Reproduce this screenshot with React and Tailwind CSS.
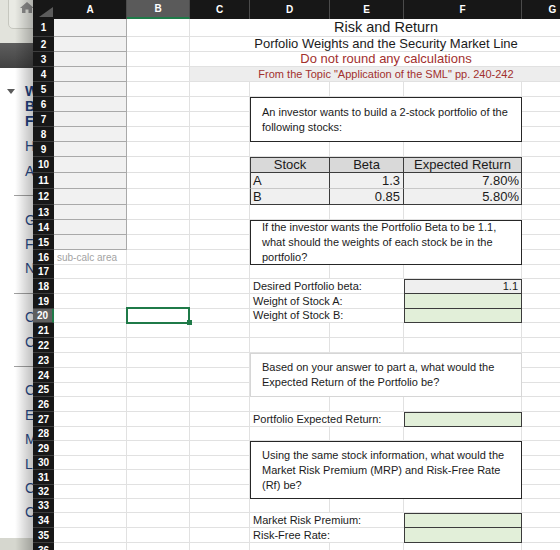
import React from 'react';

const W = {
  A: 'w-[73px]',
  B: 'w-[63px]',
  C: 'w-[60px]',
  D: 'w-[80px]',
  E: 'w-[74px]',
  F: 'w-[118px]',
  G: 'w-[62px]',
  DF: 'w-[272px]',
};
const COLS = ['A', 'B', 'C', 'D', 'E', 'F', 'G'];

const GRID = 'border-r border-b border-[#e1e1e1]';
const LINE_B = 'border-b border-[#e1e1e1]';
const INK = 'border-[#3b3b3b]';

// sheet is zoomed, so rows are not all the same height
const ROW_H = {
  1: 'h-[18px]',
  10: 'h-[16px]',
  11: 'h-[16px]',
  12: 'h-[16px]',
  17: 'h-[14px]',
  20: 'h-[14px]',
  25: 'h-[14px]',
  28: 'h-[14px]',
  30: 'h-[14px]',
  32: 'h-[14px]',
  33: 'h-[14px]',
};
const ROWS = Array.from({ length: 36 }, (_, i) => i + 1);

const TITLES = {
  1: <span className="text-[14.5px] text-[#1b1b1b]">Risk and Return</span>,
  2: <span className="text-[13px] text-[#1b1b1b]">Porfolio Weights and the Security Market Line</span>,
  3: <span className="text-[13px] text-[#a2302e]">Do not round any calculations</span>,
  4: <span className="text-[11px] text-[#a2302e]">From the Topic "Application of the SML" pp. 240-242</span>,
};

const STOCKS = {
  11: { s: 'A', beta: '1.3', er: '7.80%' },
  12: { s: 'B', beta: '0.85', er: '5.80%' },
};

const LABELS = {
  18: 'Desired Portfolio beta:',
  19: 'Weight of Stock A:',
  20: 'Weight of Stock B:',
  27: 'Portfolio Expected Return:',
  34: 'Market Risk Premium:',
  35: 'Risk-Free Rate:',
};
const INPUTS = {
  18: { bg: 'bg-[#efefef]', top: true, v: '1.1' },
  19: { bg: 'bg-[#e2efd9]' },
  20: { bg: 'bg-[#e2efd9]' },
  27: { bg: 'bg-[#e2efd9]', top: true },
  34: { bg: 'bg-[#e2efd9]', top: true },
  35: { bg: 'bg-[#e2efd9]' },
};

const BOXES = {
  6: {
    h: 'h-[45px]',
    lines: ['An investor wants to build a 2-stock portfolio of the', 'following stocks:'],
  },
  14: {
    h: 'h-[45px]',
    lines: [
      'If the investor wants the Portfolio Beta to be 1.1,',
      'what should the weights of each stock be in the',
      'portfolio?',
    ],
  },
  23: {
    h: 'h-[44px]',
    light: true,
    lines: ['Based on your answer to part a, what would the', 'Expected Return of the Portfolio be?'],
  },
  29: {
    h: 'h-[58px]',
    lines: [
      'Using the same stock information, what would the',
      'Market Risk Premium (MRP) and Risk-Free Rate',
      '(Rf) be?',
    ],
  },
};

const NAV_TOP = ['Week 5', 'Blackboard', 'Files'];
const NAV = [
  'Home',
  'Assignments',
  null,
  'Grades',
  'Files',
  'News',
  null,
  'Calendar',
  'Chat',
  null,
  'Contacts',
  'Email',
  'My Grades',
  'Library',
  'Collaborate',
  'Course Help',
];

function Cell({ w, line = GRID, className = '', children }) {
  return (
    <div className={`relative flex shrink-0 items-center whitespace-nowrap ${w} ${line} ${className}`}>
      {children}
    </div>
  );
}

function TextBox({ box }) {
  return (
    <div
      className={`absolute left-0 top-0 z-10 flex w-[272px] items-center border bg-white px-[11px] text-[11px] leading-[15px] text-[#1b1b1b] ${box.h} ${
        box.light ? 'border-[#d6d6d6]' : 'border-[#262626]'
      }`}
    >
      <p>
        {box.lines.map((l, i) => (
          <span key={i} className="block">
            {l}
          </span>
        ))}
      </p>
    </div>
  );
}

function Selection() {
  return (
    <div className="pointer-events-none absolute -left-px -top-[2px] z-20 h-[17px] w-[64px] border-2 border-[#1f7a48]">
      <div className="absolute -bottom-[3px] -right-[4px] h-[5px] w-[5px] bg-[#1f7a48]" />
    </div>
  );
}

function RowHead({ r }) {
  const on = r === 20;
  return (
    <div
      className={`flex w-[21px] shrink-0 items-center justify-center border-b border-[#3d3d3d] text-[10px] font-bold text-white ${
        on ? 'border-r-2 border-r-[#1f7a48] bg-[#5f5f5f]' : 'bg-[#171717]'
      }`}
    >
      {r}
    </div>
  );
}

function colA(r) {
  if (r <= 15) return <Cell w={W.A} line="border-r border-b border-[#a9a9a9]" className="bg-[#f1f1f1]" />;
  if (r === 16)
    return (
      <Cell w={W.A}>
        <span className="pl-[3px] text-[10px] text-[#a3a3a3]">sub-calc area</span>
      </Cell>
    );
  return <Cell w={W.A} />;
}

function colB(r) {
  return <Cell w={W.B}>{r === 20 && <Selection />}</Cell>;
}

function restCols(r) {
  if (r <= 4) {
    const band = r === 4 ? 'bg-[#ededed]' : '';
    return (
      <>
        <Cell w={W.C} line={LINE_B} className={band} />
        <Cell w={W.DF} line={LINE_B} className={`justify-center ${band}`}>
          {TITLES[r]}
        </Cell>
        <Cell w={W.G} className={band} />
      </>
    );
  }

  if (r === 10) {
    return (
      <>
        <Cell w={W.C} />
        <Cell w={W.D} line={`border ${INK}`} className="justify-center bg-[#d9d9d9] text-[13px]">
          Stock
        </Cell>
        <Cell w={W.E} line={`border-t border-r border-b ${INK}`} className="justify-center bg-[#d9d9d9] text-[13px]">
          Beta
        </Cell>
        <Cell w={W.F} line={`border-t border-r border-b ${INK}`} className="justify-center bg-[#d9d9d9] text-[13px]">
          Expected Return
        </Cell>
        <Cell w={W.G} />
      </>
    );
  }

  if (STOCKS[r]) {
    const st = STOCKS[r];
    const mid = r === 11 ? 'border-b-[#c8c8c8]' : '';
    return (
      <>
        <Cell w={W.C} />
        <Cell w={W.D} line={`border-l border-r border-b ${INK} ${mid}`} className="bg-[#f0f0f0] pl-[2px] text-[13px]">
          {st.s}
        </Cell>
        <Cell w={W.E} line={`border-r border-b ${INK} ${mid}`} className="justify-end bg-[#f0f0f0] pr-[3px] text-[13px]">
          {st.beta}
        </Cell>
        <Cell w={W.F} line={`border-r border-b ${INK} ${mid}`} className="justify-end bg-[#f0f0f0] pr-[2px] text-[13px]">
          {st.er}
        </Cell>
        <Cell w={W.G} />
      </>
    );
  }

  if (LABELS[r]) {
    const inp = INPUTS[r];
    return (
      <>
        <Cell w={W.C} />
        <Cell w={W.D} line={LINE_B} className="z-[1]">
          <span className="pl-[3px] text-[11px] text-[#1b1b1b]">{LABELS[r]}</span>
        </Cell>
        <Cell w={W.E} line={LINE_B} />
        <Cell
          w={W.F}
          line={`border-l border-r border-b ${INK} ${inp.top ? 'border-t' : ''}`}
          className={`justify-end pr-[3px] text-[11px] text-[#1b1b1b] ${inp.bg}`}
        >
          {inp.v}
        </Cell>
        <Cell w={W.G} />
      </>
    );
  }

  return (
    <>
      <Cell w={W.C} />
      <Cell w={W.D}>{BOXES[r] && <TextBox box={BOXES[r]} />}</Cell>
      <Cell w={W.E} />
      <Cell w={W.F} />
      <Cell w={W.G} />
    </>
  );
}

function Row({ r }) {
  return (
    <div className={`flex shrink-0 ${ROW_H[r] || 'h-[15px]'}`}>
      <RowHead r={r} />
      {colA(r)}
      {colB(r)}
      {restCols(r)}
    </div>
  );
}

function HeaderRow() {
  return (
    <div className="flex h-[19px] shrink-0">
      <div className="flex w-[21px] shrink-0 items-end justify-end bg-[#171717] pb-[2px] pr-px">
        <svg width="14" height="10" viewBox="0 0 14 10">
          <polygon points="14,0 14,10 0,10" fill="#5c5c5c" />
        </svg>
      </div>
      {COLS.map((k) => (
        <div
          key={k}
          className={`flex shrink-0 items-center justify-center border-r border-[#4b4b4b] text-[10px] font-bold text-white ${W[k]} ${
            k === 'B' ? 'border-b-2 border-b-[#1f7a48] bg-[#5a5a5a]' : 'bg-[#171717]'
          }`}
        >
          {k}
        </div>
      ))}
    </div>
  );
}

function Backdrop() {
  return (
    <div className="relative flex w-[33px] shrink-0 flex-col overflow-hidden whitespace-nowrap">
      <div className="flex h-[43px] shrink-0 flex-col bg-[#e2e3dc]">
        <div className="-mt-[6px] ml-[8px] h-[35px] w-[40px] shrink-0 rounded-[5px] border border-[#c6c7bf] bg-[#e9eae4] pl-[11px] pt-[7px]">
          <svg width="14" height="11" viewBox="0 0 14 11">
            <polygon points="7,0 14,6 12,6 12,11 8.5,11 8.5,7.5 5.5,7.5 5.5,11 2,11 2,6 0,6" fill="#8d8d8d" />
          </svg>
        </div>
      </div>
      <div className="h-[25px] shrink-0 bg-linear-to-b from-[#5e5e5e] to-[#424242]" />
      <div className="flex flex-1 flex-col bg-white pt-[16px]">
        {NAV_TOP.map((t, i) => (
          <div key={t} className="flex h-[15px] shrink-0 items-center">
            <span className="flex w-[25px] shrink-0 pl-[7px]">
              {i === 0 && (
                <svg width="8" height="5" viewBox="0 0 8 5">
                  <polygon points="0,0 8,0 4,5" fill="#5a5a5a" />
                </svg>
              )}
            </span>
            <span className="text-[14px] font-bold text-[#22417e]">{t}</span>
          </div>
        ))}
        <div className="mt-[5.8px]">
          {NAV.map((t, i) =>
            t ? (
              <div key={i} className="flex h-[24.4px] items-center pl-[25px] text-[14px] text-[#2a4a86]">
                {t}
              </div>
            ) : (
              <div key={i} className="flex h-[24.4px] items-center pl-[14px]">
                <div className="h-px w-full bg-[#a0a0a0]" />
              </div>
            )
          )}
        </div>
      </div>
      <div className="h-[12px] shrink-0 bg-[#d6d7cf]" />
      <div className="pointer-events-none absolute inset-y-0 right-0 w-[18px] bg-linear-to-r from-transparent to-black/25" />
    </div>
  );
}

export default function App() {
  return (
    <div className="flex h-[550px] w-[560px] overflow-hidden bg-white font-['Liberation_Sans',Arial,sans-serif] text-[#1b1b1b]">
      <Backdrop />
      <div className="flex shrink-0 flex-col">
        <HeaderRow />
        {ROWS.map((r) => (
          <Row key={r} r={r} />
        ))}
      </div>
    </div>
  );
}
